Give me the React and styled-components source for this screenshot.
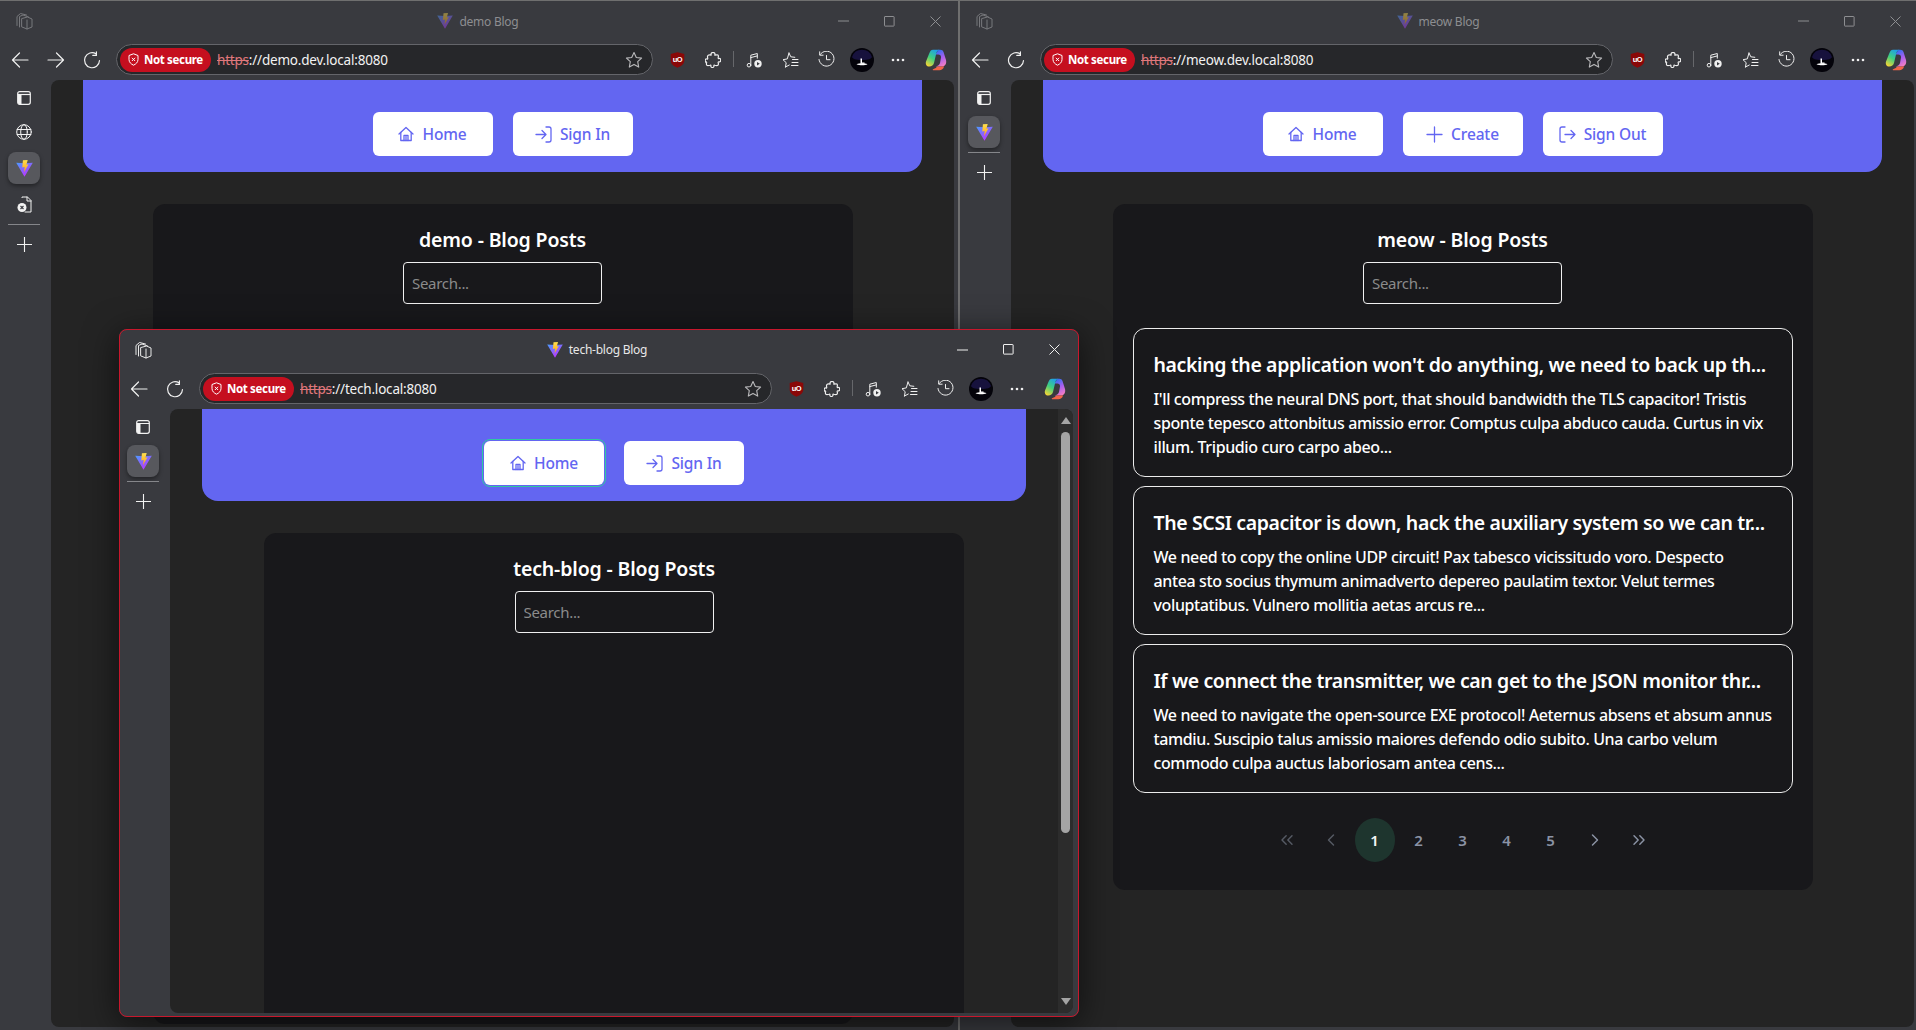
import React from "react";
import styled, { createGlobalStyle } from "styled-components";
import { ChevronLeft, ChevronRight, ChevronsLeft, ChevronsRight } from "lucide-react";

const GlobalStyle = createGlobalStyle`
  html, body {
    margin: 0;
    width: 1916px;
    height: 1030px;
    overflow: hidden;
    background: #242424;
  }
  * {
    box-sizing: border-box;
  }
`;

const Desktop = styled.div`
  position: relative;
  width: 1916px;
  height: 1030px;
  overflow: hidden;
  font-family: "Noto Sans", "Open Sans", sans-serif;
`;

const Win = styled.div`
  position: absolute;
  left: ${(p) => p.$left}px;
  top: ${(p) => p.$top}px;
  width: ${(p) => (p.$edge ? 962 : 960)}px;
  height: ${(p) => p.$height}px;
  display: flex;
  flex-direction: column;
  background: #393a3f;
  overflow: hidden;
  border-top: ${(p) => (p.$active ? "none" : "1px solid #6f6f6f")};
  border-left: ${(p) => (p.$edge ? "2px solid #6f6f6f" : "none")};
  border-radius: ${(p) => (p.$active ? "8px" : "0")};
  outline: ${(p) => (p.$active ? "1px solid #c8172c" : "none")};
  outline-offset: -1px;
  box-shadow: ${(p) => (p.$active ? "0 6px 34px rgba(0, 0, 0, 0.6)" : "none")};
  z-index: ${(p) => (p.$active ? 2 : 1)};
`;

const TitleBar = styled.div`
  height: ${(p) => (p.$active ? 44 : 43)}px;
  flex: none;
  display: grid;
  grid-template-columns: 1fr auto 1fr;
  align-items: center;
  padding: 0 0 3px 16px;
  color: ${(p) => (p.$active ? "#e8e8e8" : "#8d8e91")};
`;

const TitleCenter = styled.div`
  display: flex;
  align-items: center;
  gap: 6px;
  font-size: 12px;
  letter-spacing: -0.25px;
  margin-left: -20px;
`;

const Logo = styled.span`
  display: inline-flex;
  opacity: ${(p) => (p.$dim ? 0.45 : 1)};
`;

const WinControls = styled.div`
  display: flex;
  justify-self: end;
  margin-right: 2px;
`;

const WinControl = styled.span`
  width: 46px;
  height: 32px;
  display: flex;
  align-items: center;
  justify-content: center;
`;

const Toolbar = styled.div`
  height: 36px;
  flex: none;
  display: flex;
  align-items: flex-start;
  padding: 0 6px 0 2px;
  color: #f0f0f0;
`;

const ToolButton = styled.span`
  width: 36px;
  height: 31px;
  flex: none;
  display: flex;
  align-items: center;
  justify-content: center;
  margin-left: ${(p) => p.$ml || 0}px;
`;

const AddressBar = styled.div`
  flex: 1;
  height: 31px;
  margin: 0 6px;
  display: flex;
  align-items: center;
  padding: 0 3px;
  background: #26272a;
  border: 1px solid #64656a;
  border-radius: 16px;
`;

const SecurePill = styled.span`
  width: 91px;
  height: 24px;
  flex: none;
  display: flex;
  align-items: center;
  gap: 5px;
  padding-left: 8px;
  background: #c50f1f;
  border-radius: 12px;
  color: #fff;
  font-size: 11.5px;
  font-weight: 700;
  letter-spacing: -0.35px;
`;

const Url = styled.span`
  flex: 1;
  margin-left: 6px;
  font-size: 13.5px;
  letter-spacing: -0.2px;
  color: #f2f2f2;
`;

const Scheme = styled.span`
  color: #e0787c;
  text-decoration: line-through;
`;

const StarWrap = styled.span`
  display: flex;
  margin-right: 6px;
`;

const Separator = styled.span`
  width: 1px;
  height: 16px;
  flex: none;
  margin: 7px 2px 0;
  background: #66676b;
`;

const Body = styled.div`
  flex: 1;
  min-height: 0;
  display: flex;
`;

const SideBar = styled.div`
  width: 51px;
  flex: none;
  display: flex;
  flex-direction: column;
  align-items: center;
  padding: 0 3px 0 0;
  color: #f2f2f2;
`;

const SideItem = styled.span`
  width: 32px;
  height: 32px;
  margin-top: ${(p) => p.$mt || 0}px;
  display: flex;
  align-items: center;
  justify-content: center;
  border-radius: 8px;
  background: ${(p) => (p.$selected ? "#57585d" : "transparent")};
  box-shadow: ${(p) => (p.$selected ? "0 2px 4px rgba(0, 0, 0, 0.4)" : "none")};
`;

const SideRule = styled.span`
  width: 32px;
  height: 1px;
  flex: none;
  margin-top: 4px;
  background: #85868a;
`;

const Viewport = styled.div`
  flex: 1;
  min-width: 0;
  display: flex;
  margin: 0 6px 4px 0;
  background: #242424;
  border-radius: 8px;
  overflow: hidden;
`;

const Page = styled.div`
  flex: 1;
  min-width: 0;
  padding: 0 32px;
`;

const Banner = styled.div`
  height: 92px;
  display: flex;
  justify-content: center;
  gap: 20px;
  padding-top: 32px;
  background: #6366f1;
  border-radius: 0 0 16px 16px;
`;

const NavButton = styled.div`
  width: 120px;
  height: 44px;
  display: flex;
  align-items: center;
  justify-content: center;
  gap: 8px;
  background: #fff;
  border-radius: 6px;
  color: #6366f1;
  font-size: 15.5px;
  font-weight: 500;
  letter-spacing: -0.15px;
  outline: ${(p) => (p.$focused ? "1.5px solid #2fc9a0" : "none")};
  outline-offset: 1.5px;
`;

const Card = styled.div`
  max-width: 700px;
  min-height: ${(p) => p.$minHeight || 0}px;
  margin: 32px auto 0;
  padding: 20px 20px 28px;
  display: flex;
  flex-direction: column;
  align-items: center;
  background: #18181b;
  border-radius: 12px;
`;

const Heading = styled.h2`
  margin: 0;
  height: 32px;
  line-height: 32px;
  color: #fff;
  font-size: 19.5px;
  font-weight: 600;
  letter-spacing: -0.15px;
`;

const SearchBox = styled.input`
  width: 199px;
  height: 42px;
  margin-top: 6px;
  padding: 0 8px;
  background: #18181b;
  border: 1px solid #f0f0f0;
  border-radius: 4px;
  color: #fff;
  font-family: inherit;
  font-size: 15px;
  letter-spacing: -0.3px;
  &::placeholder {
    color: #8b8b8b;
    opacity: 1;
  }
`;

const PostList = styled.div`
  width: 100%;
  margin-top: 24px;
  display: flex;
  flex-direction: column;
  gap: 9px;
`;

const Post = styled.article`
  height: 149px;
  padding: 21px 20px;
  background: #18181b;
  border: 1px solid #ececec;
  border-radius: 12px;
  color: #fff;
`;

const PostTitle = styled.h3`
  margin: 0;
  height: 30px;
  line-height: 30px;
  font-size: 19.5px;
  font-weight: 600;
  letter-spacing: -0.38px;
  white-space: nowrap;
`;

const PostLine = styled.p`
  margin: 0;
  height: 24px;
  line-height: 24px;
  font-size: 16px;
  font-weight: 500;
  letter-spacing: -0.38px;
  white-space: nowrap;
  &:first-of-type {
    margin-top: 7px;
  }
`;

const Pager = styled.div`
  margin-top: 25px;
  display: flex;
  gap: 4px;
`;

const PageItem = styled.span`
  width: 40px;
  height: 44px;
  display: flex;
  align-items: center;
  justify-content: center;
  border-radius: 50%;
  background: ${(p) => (p.$current ? "#1e352e" : "transparent")};
  color: ${(p) => (p.$current ? "#f4f4f4" : p.$muted ? "#555a64" : "#8b93a5")};
  font-size: 15px;
  font-weight: 600;
`;

const ScrollBar = styled.div`
  width: 15px;
  flex: none;
  display: flex;
  flex-direction: column;
  align-items: center;
  padding: 8px 0 8px;
  background: #2c2c2c;
`;

const ScrollThumb = styled.div`
  width: 9px;
  height: 401px;
  margin: 8px 0 auto;
  background: #a4a4a4;
  border-radius: 5px;
`;

const Arrow = styled.span`
  width: 0;
  height: 0;
  border-left: 5px solid transparent;
  border-right: 5px solid transparent;
  ${(p) => (p.$up ? "border-bottom" : "border-top")}: 7px solid #a4a4a4;
`;

const line = {
  fill: "none",
  stroke: "currentColor",
  strokeWidth: 1.2,
  strokeLinecap: "round",
  strokeLinejoin: "round",
};

const BackIcon = () => (
  <svg width="18" height="18" viewBox="0 0 18 18" {...line}>
    <path d="M17 9H1.5M8.5 2 1.5 9l7 7" />
  </svg>
);

const ForwardIcon = () => (
  <svg width="18" height="18" viewBox="0 0 18 18" {...line}>
    <path d="M1 9h15.5M9.5 2l7 7-7 7" />
  </svg>
);

const RefreshIcon = () => (
  <svg width="18" height="18" viewBox="0 0 18 18" {...line}>
    <path d="M16.5 9.5A7.5 7.5 0 1 1 13.2 3M13.4 0.8v3.6H9.8" />
  </svg>
);

const WorkspaceIcon = ({ color }) => (
  <svg width="17" height="18" viewBox="0 0 17 18" {...line} stroke={color} strokeWidth="1">
    <path d="M1 13.5V4.5L4.5 1.5l6 1.5M3.500 15V4.500L7 3l5.500 2" />
    <path d="M6 6.500 11.500 5l4.500 2v8l-5 2-5-2z" />
    <path d="M11 17V8" />
  </svg>
);

const MinIcon = ({ color }) => (
  <svg width="11" height="2" viewBox="0 0 11 2">
    <path d="M0 1h11" stroke={color} />
  </svg>
);

const MaxIcon = ({ color }) => (
  <svg width="11" height="11" viewBox="0 0 11 11">
    <rect x="0.5" y="0.5" width="9.6" height="9.6" rx="0.5" fill="none" stroke={color} />
  </svg>
);

const CloseIcon = ({ color }) => (
  <svg width="11" height="11" viewBox="0 0 11 11">
    <path d="M0.5 0.5l10 10M10.5 0.5l-10 10" fill="none" stroke={color} />
  </svg>
);

const ShieldX = () => (
  <svg width="11" height="13" viewBox="0 0 11 13" fill="none" stroke="#fff" strokeWidth="1">
    <path d="M5.5 0.8 10 2.5v4c0 2.8-2 4.500-4.500 5.700C3 11 1 9.300 1 6.500v-4z" />
    <path d="M3.900 4.800l3.200 3.200M7.100 4.800 3.900 8" />
  </svg>
);

const StarIcon = () => (
  <svg width="18" height="18" viewBox="0 0 18 18" fill="none" stroke="#b9b9bb" strokeWidth="1.1" strokeLinejoin="round">
    <path d="M9 1.500l2.300 5 5.300 .6-3.900 3.600 1 5.400L9 13.400l-4.700 2.700 1-5.400-3.900-3.600 5.300-.6z" />
  </svg>
);

const UBlockIcon = () => (
  <svg width="15" height="16" viewBox="0 0 15 16">
    <path d="M7.500 0.300 14.300 2v6.600c0 3.500-3.200 5.800-6.800 7.100C3.900 14.400 0.700 12.100 0.700 8.600V2z" fill="#8a0808" />
    <text x="7.500" y="9.800" textAnchor="middle" fontSize="7.500" fontWeight="700" letterSpacing="-0.4" fill="#fff" fontFamily="Liberation Sans, sans-serif">
      uO
    </text>
  </svg>
);

const PuzzleIcon = () => (
  <svg width="16" height="16" viewBox="0 0 16 16" {...line}>
    <path d="M6.200 3.200C5.600 1 6.900 .5 8 .5s2.400 .5 1.800 2.700c3-1 4.100-.2 3.400 2.500-.2 .9 .3 1 .9 .8 1.300-.4 1.600 .9 1.600 1.700s-.3 2.100-1.600 1.700c-.6-.2-1.100-.1-.9 .8 .7 2.700-.4 3.500-3.400 2.500-.8-.3-1 .2-.9 .8 .2 1-.7 1.500-1.500 1.500s-1.700-.5-1.500-1.500c.1-.6-.1-1.100-.9-.8-3 1-4.100 .2-3.400-2.500 .2-.9-.3-1-.9-.8C.5 10.800 .2 9.500 .2 8.700s.3-2.100 1.600-1.700c.6 .2 1.100 .1 .9-.8-.7-2.700 .5-3.900 3.500-3z" />
  </svg>
);

const MediaIcon = () => (
  <svg width="16" height="16" viewBox="0 0 16 16">
    <g {...line} strokeWidth="1">
      <circle cx="3" cy="13.200" r="1.800" />
      <path d="M4.800 13V3.200l6.500-1.700v4.700M4.800 5.600l6.500-1.700" />
    </g>
    <circle cx="12" cy="11.800" r="3.700" fill="#f0f0f0" />
    <path d="M11 10v3.600l2.800-1.800z" fill="#393a3f" />
  </svg>
);

const FavListIcon = () => (
  <svg width="17" height="16" viewBox="0 0 17 16" {...line} strokeWidth="1">
    <path d="M7 1l1.800 3.800 4 .5M3.500 15l.7-4.300L1 7.700l4.300-.8L7 1M3.500 15 7.300 13" />
    <path d="M10.500 7.500H16M10 10.500h6M9.500 13.500H16" />
  </svg>
);

const HistoryIcon = () => (
  <svg width="17" height="17" viewBox="0 0 17 17" {...line} strokeWidth="1">
    <path d="M2.200 3.500A7.500 7.500 0 1 1 1 8.500M1.700 0.800v3.400h3.400M8.500 4.500v4.200H12" />
  </svg>
);

const AvatarIcon = () => (
  <svg width="24" height="24" viewBox="0 0 24 24">
    <circle cx="12" cy="12" r="12" fill="#04030a" />
    <path d="M2 9a10.500 10.500 0 0 1 20 0c-1 2-3 3-10 3S3 11 2 9z" fill="#17123d" />
    <path d="M6.500 16.200c3-1.400 8.500-1.400 11 0-2.500 1.400-8 1.400-11 0z" fill="#fff" />
    <path d="M10.500 10.500h1.500v4h2.500v1.300h-4z" fill="#fff" />
  </svg>
);

const DotsIcon = () => (
  <svg width="14" height="4" viewBox="0 0 14 4" fill="#f0f0f0">
    <circle cx="2" cy="2" r="1.300" />
    <circle cx="7" cy="2" r="1.300" />
    <circle cx="12" cy="2" r="1.300" />
  </svg>
);

const CopilotIcon = ({ id }) => (
  <svg width="22" height="22" viewBox="0 0 22 22">
    <defs>
      <linearGradient id={`${id}a`} x1="0.700" y1="0" x2="0.200" y2="1">
        <stop offset="0" stopColor="#1f9fe8" />
        <stop offset="0.5" stopColor="#3fd07f" />
        <stop offset="1" stopColor="#f8d534" />
      </linearGradient>
      <linearGradient id={`${id}b`} x1="0.300" y1="0" x2="0.700" y2="1">
        <stop offset="0" stopColor="#2f6ff0" />
        <stop offset="0.5" stopColor="#a85ff0" />
        <stop offset="1" stopColor="#f57fc0" />
      </linearGradient>
    </defs>
    <path d="M13.500 .8h1.800c1.600 0 2.700 .8 3.200 2.200L21 11c.9 3-.8 6.600-4 6.600h-6.500c2.500-.4 4-1.800 4.500-3.600l1-5.500c.3-1.800-1-3-2.700-3h-3z" fill={`url(#${id}b)`} />
    <path d="M8 .8h6.500c-1.800 .4-2.700 1.600-3.200 3.400L9 14c-.6 2-2.200 3.600-4.700 3.600C1.500 17.600 .2 15 1 12.500L4 5C5 2.300 6 .8 8 .8z" fill={`url(#${id}a)`} />
    <path d="M8.500 21.300h6c2 0 3.800-1.200 4.600-3.700h-5.300c-1.200 0-2.200 .2-3 1.300l-2.800 1.400c-.4 .5-.3 1 .5 1z" fill="#f2654a" />
  </svg>
);

const PanelIcon = () => (
  <svg width="14" height="14" viewBox="0 0 14 14">
    <rect x="0.700" y="0.700" width="12.600" height="12.600" rx="2" fill="none" stroke="currentColor" strokeWidth="1.200" />
    <path d="M0.700 3.500h12.600" stroke="currentColor" strokeWidth="1.200" />
    <path d="M1 3.500h3.500v9.500H2.500A1.500 1.500 0 0 1 1 11.500z" fill="currentColor" />
  </svg>
);

const GlobeIcon = () => (
  <svg width="16" height="16" viewBox="0 0 16 16" {...line} strokeWidth="1">
    <circle cx="8" cy="8" r="7.300" />
    <ellipse cx="8" cy="8" rx="3.300" ry="7.300" />
    <path d="M1.200 5.500h13.600M1.200 10.500h13.600" />
  </svg>
);

const FileXIcon = () => (
  <svg width="15" height="17" viewBox="0 0 15 17">
    <path d="M5 1.500V1h5.500L14 4.500V16H8M10 1v4h4" {...line} strokeWidth="1" />
    <circle cx="5" cy="11.500" r="4.500" fill="#f2f2f2" />
    <path d="M3.500 10l3 3M6.500 10l-3 3" stroke="#393a3f" strokeWidth="1.100" />
  </svg>
);

const AddIcon = () => (
  <svg width="15" height="15" viewBox="0 0 15 15">
    <path d="M7.500 0v15M0 7.500h15" stroke="currentColor" strokeWidth="1.100" />
  </svg>
);

const ViteIcon = ({ id, size = 17 }) => (
  <svg width={size} height={size} viewBox="0 0 16 16">
    <defs>
      <linearGradient id={`${id}v`} x1="0" y1="0" x2="0.600" y2="1">
        <stop offset="0" stopColor="#4a9cff" />
        <stop offset="1" stopColor="#bd34fe" />
      </linearGradient>
      <linearGradient id={`${id}y`} x1="0" y1="0" x2="0" y2="1">
        <stop offset="0" stopColor="#ffe14d" />
        <stop offset="1" stopColor="#ff9d1a" />
      </linearGradient>
    </defs>
    <path d="M0.200 2.500 8 3.100l7.800-.6L8 15.700z" fill={`url(#${id}v)`} />
    <path d="M6.500 0.300 11 0 9.800 4.500l2-.5L7.500 11.500l.7-5-2.300 .5z" fill={`url(#${id}y)`} />
  </svg>
);

// nav button icons, strokes follow the button text colour
const navStroke = {
  fill: "none",
  stroke: "currentColor",
  strokeWidth: 1.300,
  strokeLinecap: "round",
  strokeLinejoin: "round",
};

const HomeIcon = () => (
  <svg width="16" height="16" viewBox="0 0 16 16" {...navStroke}>
    <path d="M1 8 8 1.500 15 8" />
    <path d="M2.800 6.500v8h10.400v-8" />
    <path d="M6 14.500V9.300h4v5.200M8 9.300v5.200" />
  </svg>
);

const SignInIcon = () => (
  <svg width="17" height="17" viewBox="0 0 17 17" {...navStroke}>
    <path d="M1 8.500h9.500M7 4.500l4 4-4 4" />
    <path d="M11 1h3a2 2 0 0 1 2 2v11a2 2 0 0 1-2 2h-3" />
  </svg>
);

const CreateIcon = () => (
  <svg width="17" height="17" viewBox="0 0 17 17" {...navStroke}>
    <path d="M8.500 1v15M1 8.500h15" />
  </svg>
);

const SignOutIcon = () => (
  <svg width="17" height="17" viewBox="0 0 17 17" {...navStroke}>
    <path d="M6 1H3a2 2 0 0 0-2 2v11a2 2 0 0 0 2 2h3" />
    <path d="M6 8.500h10M12 4.500l4 4-4 4" />
  </svg>
);

const Chrome = ({ id, host, title, active, hasForward, sideItems, children }) => {
  const tint = active ? "#eaeaea" : "#77787c";
  const ctrl = active ? "#f0f0f0" : "#8d8e91";
  const hasGlobe = sideItems.includes("globe");
  return (
    <>
      <TitleBar $active={active}>
        <Logo>
          <WorkspaceIcon color={tint} />
        </Logo>
        <TitleCenter>
          <Logo $dim={!active}>
            <ViteIcon id={`${id}t`} size={16} />
          </Logo>
          {title}
        </TitleCenter>
        <WinControls>
          <WinControl>
            <MinIcon color={ctrl} />
          </WinControl>
          <WinControl>
            <MaxIcon color={ctrl} />
          </WinControl>
          <WinControl>
            <CloseIcon color={ctrl} />
          </WinControl>
        </WinControls>
      </TitleBar>
      <Toolbar>
        <ToolButton>
          <BackIcon />
        </ToolButton>
        {hasForward && (
          <ToolButton>
            <ForwardIcon />
          </ToolButton>
        )}
        <ToolButton>
          <RefreshIcon />
        </ToolButton>
        <AddressBar>
          <SecurePill>
            <ShieldX />
            Not secure
          </SecurePill>
          <Url>
            <Scheme>https</Scheme>://{host}
          </Url>
          <StarWrap>
            <StarIcon />
          </StarWrap>
        </AddressBar>
        <ToolButton>
          <UBlockIcon />
        </ToolButton>
        <ToolButton>
          <PuzzleIcon />
        </ToolButton>
        <Separator />
        <ToolButton>
          <MediaIcon />
        </ToolButton>
        <ToolButton>
          <FavListIcon />
        </ToolButton>
        <ToolButton>
          <HistoryIcon />
        </ToolButton>
        <ToolButton>
          <AvatarIcon />
        </ToolButton>
        <ToolButton>
          <DotsIcon />
        </ToolButton>
        <ToolButton $ml={2}>
          <CopilotIcon id={id} />
        </ToolButton>
      </Toolbar>
      <Body>
        <SideBar>
          <SideItem $mt={2}>
            <PanelIcon />
          </SideItem>
          {hasGlobe && (
            <SideItem $mt={2}>
              <GlobeIcon />
            </SideItem>
          )}
          <SideItem $selected $mt={hasGlobe ? 4 : 2}>
            <ViteIcon id={`${id}s`} />
          </SideItem>
          {sideItems.includes("file") && (
            <SideItem $mt={4}>
              <FileXIcon />
            </SideItem>
          )}
          <SideRule />
          <SideItem $mt={3}>
            <AddIcon />
          </SideItem>
        </SideBar>
        <Viewport>{children}</Viewport>
      </Body>
    </>
  );
};

const Nav = ({ items, focused }) => (
  <Banner>
    {items.map(([Icon, label]) => (
      <NavButton key={label} $focused={focused === label}>
        <Icon />
        {label}
      </NavButton>
    ))}
  </Banner>
);

const posts = [
  {
    title: "hacking the application won't do anything, we need to back up th...",
    lines: [
      "I'll compress the neural DNS port, that should bandwidth the TLS capacitor! Tristis",
      "sponte tepesco attonbitus amissio error. Comptus culpa abduco cauda. Curtus in vix",
      "illum. Tripudio curo carpo abeo...",
    ],
  },
  {
    title: "The SCSI capacitor is down, hack the auxiliary system so we can tr...",
    lines: [
      "We need to copy the online UDP circuit! Pax tabesco vicissitudo voro. Despecto",
      "antea sto socius thymum animadverto depereo paulatim textor. Velut termes",
      "voluptatibus. Vulnero mollitia aetas arcus re...",
    ],
  },
  {
    title: "If we connect the transmitter, we can get to the JSON monitor thr...",
    lines: [
      "We need to navigate the open-source EXE protocol! Aeternus absens et absum annus",
      "tamdiu. Suscipio talus amissio maiores defendo odio subito. Una carbo velum",
      "commodo culpa auctus laboriosam antea cens...",
    ],
  },
];

const homeItem = [HomeIcon, "Home"];
const signInItem = [SignInIcon, "Sign In"];
const createItem = [CreateIcon, "Create"];
const signOutItem = [SignOutIcon, "Sign Out"];

const Pagination = () => (
  <Pager>
    <PageItem $muted>
      <ChevronsLeft size={20} strokeWidth={1.75} />
    </PageItem>
    <PageItem $muted>
      <ChevronLeft size={20} strokeWidth={1.75} />
    </PageItem>
    <PageItem $current>1</PageItem>
    {[2, 3, 4, 5].map((n) => (
      <PageItem key={n}>{n}</PageItem>
    ))}
    <PageItem>
      <ChevronRight size={20} strokeWidth={1.75} />
    </PageItem>
    <PageItem>
      <ChevronsRight size={20} strokeWidth={1.75} />
    </PageItem>
  </Pager>
);

export default function App() {
  return (
    <Desktop>
      <GlobalStyle />
      <Win $left={0} $top={0} $height={1031}>
        <Chrome id="w1" host="demo.dev.local:8080" title="demo Blog" hasForward sideItems={["globe", "file"]}>
          <Page>
            <Nav items={[homeItem, signInItem]} />
            <Card $minHeight={820}>
              <Heading>demo - Blog Posts</Heading>
              <SearchBox placeholder="Search..." />
            </Card>
          </Page>
        </Chrome>
      </Win>
      <Win $left={958} $top={0} $height={1031} $edge>
        <Chrome id="w2" host="meow.dev.local:8080" title="meow Blog" sideItems={[]}>
          <Page>
            <Nav items={[homeItem, createItem, signOutItem]} />
            <Card>
              <Heading>meow - Blog Posts</Heading>
              <SearchBox placeholder="Search..." />
              <PostList>
                {posts.map((post) => (
                  <Post key={post.title}>
                    <PostTitle>{post.title}</PostTitle>
                    {post.lines.map((text) => (
                      <PostLine key={text}>{text}</PostLine>
                    ))}
                  </Post>
                ))}
              </PostList>
              <Pagination />
            </Card>
          </Page>
        </Chrome>
      </Win>
      <Win $left={119} $top={329} $height={688} $active>
        <Chrome id="w3" host="tech.local:8080" title="tech-blog Blog" active sideItems={[]}>
          <Page>
            <Nav items={[homeItem, signInItem]} focused="Home" />
            <Card $minHeight={600}>
              <Heading>tech-blog - Blog Posts</Heading>
              <SearchBox placeholder="Search..." />
            </Card>
          </Page>
          <ScrollBar>
            <Arrow $up />
            <ScrollThumb />
            <Arrow />
          </ScrollBar>
        </Chrome>
      </Win>
    </Desktop>
  );
}
